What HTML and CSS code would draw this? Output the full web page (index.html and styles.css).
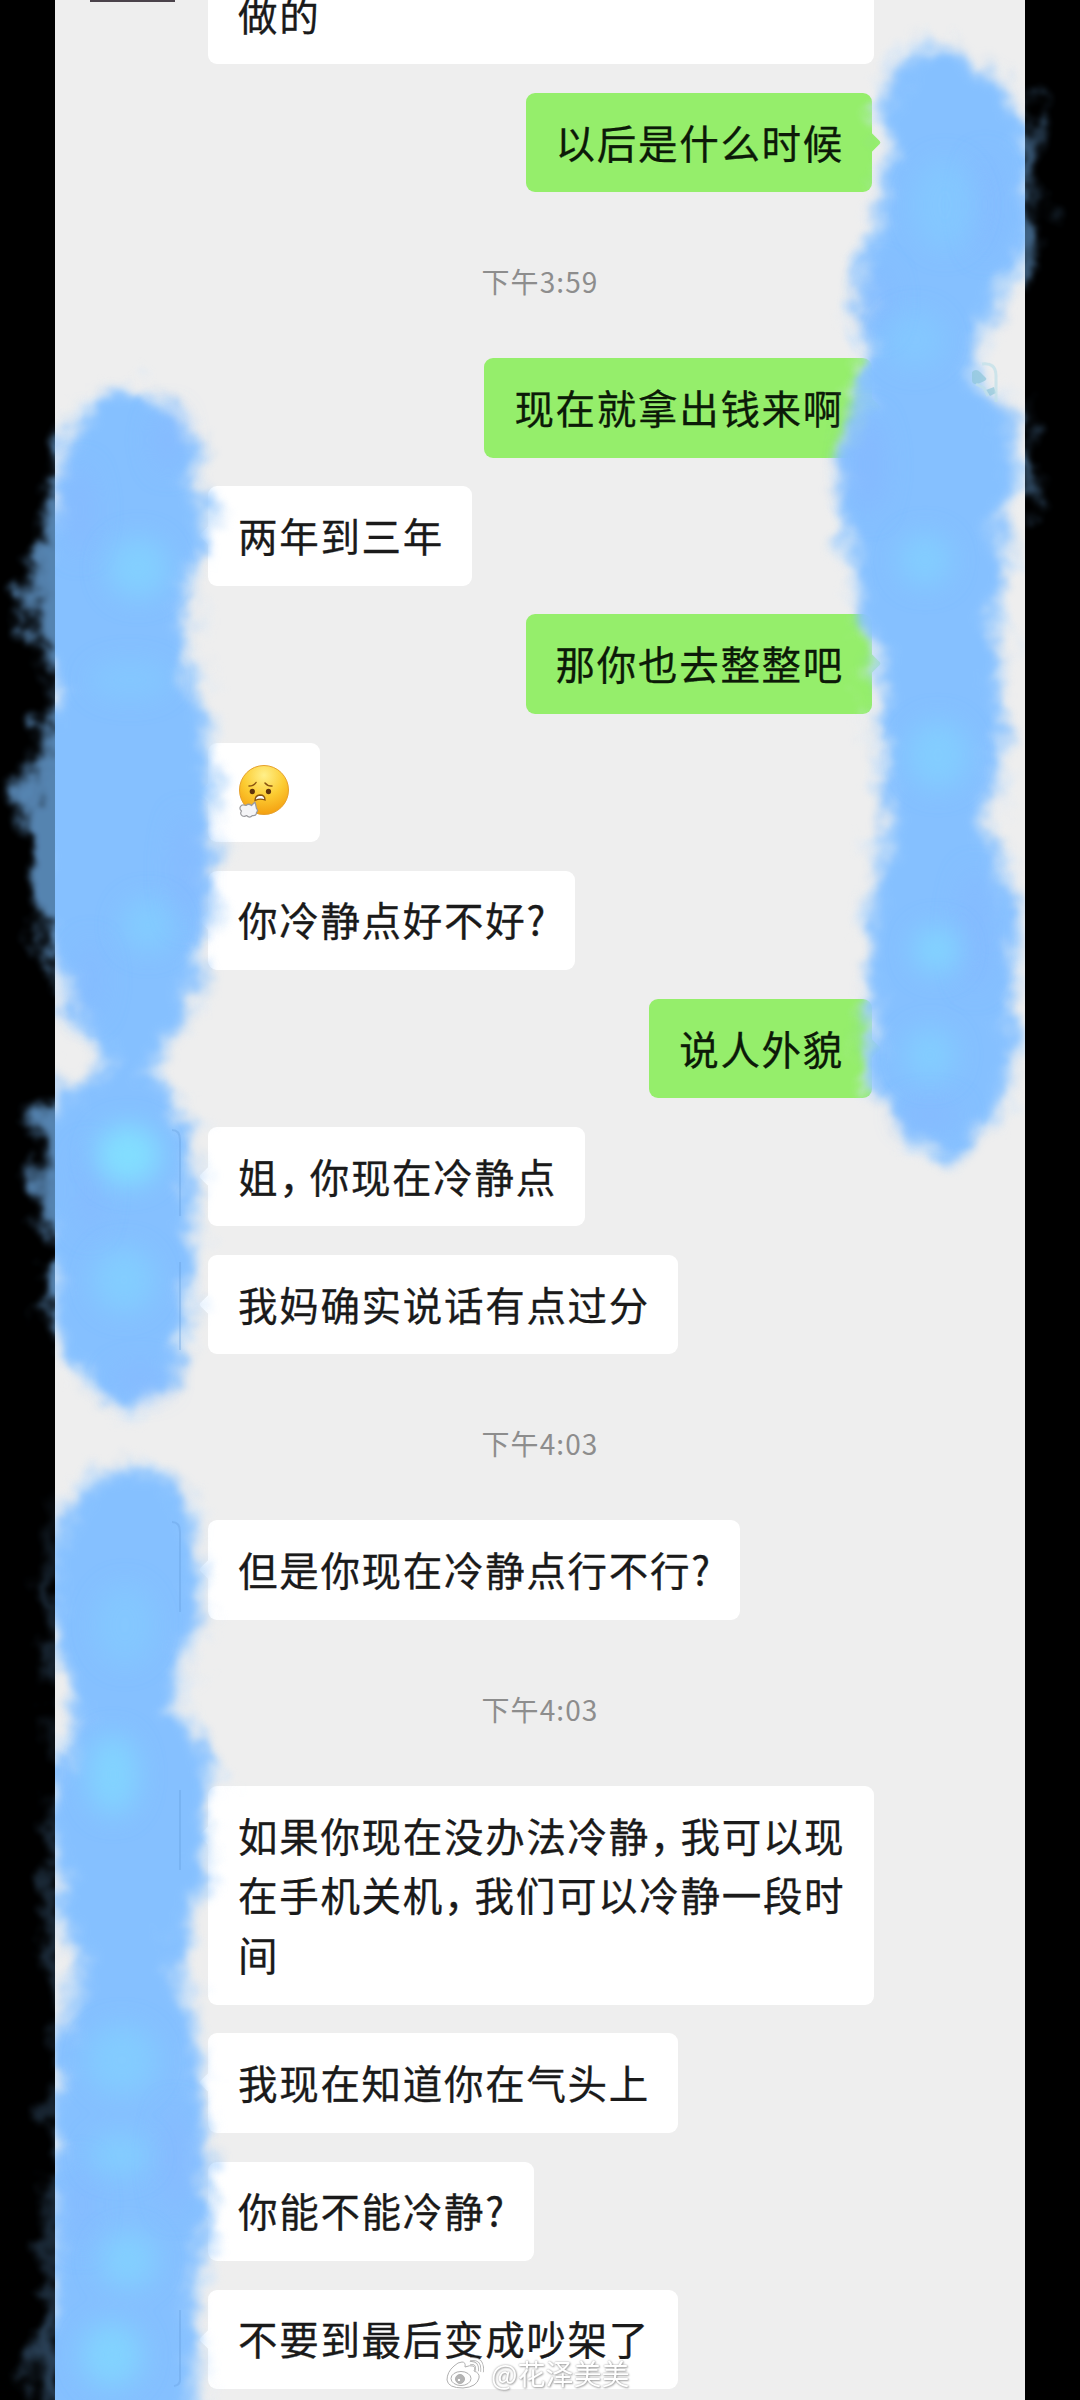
FILE: index.html
```html
<!DOCTYPE html>
<html lang="zh-CN">
<head>
<meta charset="utf-8">
<title>聊天记录</title>
<link rel="stylesheet" href="styles.css">
</head>
<body>
<div class="screen">
  <main class="chat">
    <div class="row first"><span class="avatar"></span><div class="bubble wide">做的</div></div>
    <div class="row me"><div class="bubble">以后是什么时候</div></div>
    <div class="time">下午3:59</div>
    <div class="row me"><div class="bubble">现在就拿出钱来啊</div></div>
    <div class="row"><div class="bubble">两年到三年</div></div>
    <div class="row me"><div class="bubble">那你也去整整吧</div></div>
    <div class="row"><div class="bubble emoji">
      <svg viewBox="0 0 54 56" width="54" height="56">
        <defs>
          <radialGradient id="face" cx=".5" cy=".2" r=".85"><stop offset="0" stop-color="#fff08a"/><stop offset=".5" stop-color="#fccc32"/><stop offset="1" stop-color="#f39a0c"/></radialGradient>
        </defs>
        <circle cx="26" cy="26" r="24.5" fill="url(#face)" stroke="#e6a02b" stroke-width="1"/>
        <ellipse cx="14.3" cy="27.500" rx="2.6" ry="2.8" fill="#60340c"/>
        <ellipse cx="30.5" cy="27.500" rx="2.6" ry="2.8" fill="#60340c"/>
        <path d="M11 22q5 0 7-3.500M27 19q3 3.500 7 3" fill="none" stroke="#8a5410" stroke-width="1.500" stroke-linecap="round"/>
        <path d="M17 36.500q0-5 5-5.500 5 0 5 5-5-2-10 .5z" fill="#fff" stroke="#8a5410" stroke-width="1.300"/>
        <path d="M17 38l-3.500 3.500q-3-2.500-5.500 0-4-1.500-5.500 1-1.500 2.500 1 4.500-2 3 1 5 2 1 4-.5 3 3 6 0 4 .5 4-3 2-2 0-4z" fill="#f5f5f7" stroke="#9a9a9e" stroke-width="1.200" stroke-linejoin="round"/>
      </svg>
    </div></div>
    <div class="row"><div class="bubble">你冷静点好不好?</div></div>
    <div class="row me"><div class="bubble">说人外貌</div></div>
    <div class="row"><div class="bubble">姐<span class="comma">，</span>你现在冷静点</div></div>
    <div class="row"><div class="bubble">我妈确实说话有点过分</div></div>
    <div class="time">下午4:03</div>
    <div class="row"><div class="bubble">但是你现在冷静点行不行?</div></div>
    <div class="time">下午4:03</div>
    <div class="row"><div class="bubble wide">如果你现在没办法冷静<span class="comma">，</span>我可以现<br>在手机关机<span class="comma">，</span>我们可以冷静一段时<br>间</div></div>
    <div class="row"><div class="bubble">我现在知道你在气头上</div></div>
    <div class="row"><div class="bubble">你能不能冷静?</div></div>
    <div class="row"><div class="bubble">不要到最后变成吵架了</div></div>
  </main>

  <svg class="brush" viewBox="0 0 1080 2400" width="1080" height="2400">
    <defs>
      <filter id="halo" filterUnits="userSpaceOnUse" x="-40" y="-40" width="1160" height="2480" color-interpolation-filters="sRGB">
        <feGaussianBlur stdDeviation="7" result="b"/>
        <feTurbulence type="fractalNoise" baseFrequency=".03" numOctaves="5" seed="3"/>
        <feDisplacementMap in="b" scale="60" xChannelSelector="R" yChannelSelector="G"/>
        <feGaussianBlur stdDeviation="2"/>
      </filter>
      <filter id="rough" filterUnits="userSpaceOnUse" x="-40" y="-40" width="1160" height="2480" color-interpolation-filters="sRGB">
        <feGaussianBlur stdDeviation="8" result="b"/>
        <feTurbulence type="fractalNoise" baseFrequency=".03" numOctaves="4" seed="7"/>
        <feDisplacementMap in="b" scale="38" xChannelSelector="R" yChannelSelector="G"/>
        <feGaussianBlur stdDeviation="2"/>
      </filter>
      <filter id="soft" filterUnits="userSpaceOnUse" x="0" y="0" width="1080" height="2400"><feGaussianBlur stdDeviation="13"/></filter>
      <clipPath id="panel"><rect x="55" y="0" width="970" height="2400"/></clipPath>
      <clipPath id="sides"><path d="M0 0H55V2400H0zM1025 0H1080V2400H1025z"/></clipPath>
      <path id="right" d="M925 45L965 58 998 82 1022 120 1034 165 1034 230 1007 280 985 325 968 362 990 395 1014 440 1018 480 1002 520 1003 570 994 610 1000 700 1003 740 987 800 987 840 1010 890 1018 960 1012 1000 1010 1080 987 1125 955 1155 935 1155 905 1130 878 1095 868 1060 872 1000 868 950 872 900 888 840 890 800 878 735 888 690 868 640 855 570 843 520 841 470 855 430 867 358 862 320 862 270 877 220 887 180 885 110 898 65z"/>
      <path id="left" d="M130 390L165 403 187 430 195 475 207 520 190 575 184 620 190 660 200 720 212 780 211 850 208 920 195 980 180 1020 158 1058 145 1072 168 1090 185 1120 193 1200 190 1300 175 1370 150 1400 125 1410 95 1385 70 1360 52 1320 48 1240 38 1190 32 1140 50 1095 95 1078 108 1058 77 1025 66 985 47 950 36 920 34 850 18 800 38 745 62 695 50 675 34 640 25 600 35 560 52 520 60 470 72 430 95 402z"/>
      <path id="low" d="M130 1468L160 1475 187 1500 198 1560 190 1640 172 1695 190 1725 210 1775 205 1850 193 1910 172 1960 186 2000 198 2060 208 2160 205 2230 194 2290 195 2440 40 2440 34 2360 50 2300 54 2200 53 2080 62 2020 84 1965 62 1920 50 1830 52 1775 78 1730 70 1680 54 1640 50 1550 68 1510 95 1480z"/>
    </defs>
    <g clip-path="url(#panel)">
      <g filter="url(#halo)" fill="#bcdcfb" stroke="#d3e6fa" stroke-width="10" stroke-linejoin="round" opacity=".7">
        <use href="#right"/><use href="#left"/><use href="#low"/>
      </g>
      <g filter="url(#rough)" fill="#85c0ff">
        <use href="#right"/><use href="#left"/><use href="#low"/>
      </g>
      <g filter="url(#soft)" fill="#86b8ff">
        <ellipse cx="985" cy="205" rx="15" ry="50" opacity=".5"/>
        <ellipse cx="880" cy="300" rx="12" ry="35" opacity=".5"/>
        <ellipse cx="868" cy="465" rx="16" ry="50" opacity=".8"/>
        <ellipse cx="975" cy="930" rx="16" ry="60" opacity=".6"/>
        <ellipse cx="930" cy="1115" rx="30" ry="14" opacity=".7"/>
        <ellipse cx="168" cy="440" rx="14" ry="30" opacity=".7"/>
        <ellipse cx="80" cy="510" rx="14" ry="45" opacity=".7"/>
        <ellipse cx="185" cy="870" rx="12" ry="55" opacity=".7"/>
        <ellipse cx="90" cy="980" rx="14" ry="40" opacity=".5"/>
        <ellipse cx="140" cy="1380" rx="28" ry="14" opacity=".7"/>
        <ellipse cx="90" cy="1190" rx="12" ry="45" opacity=".6"/>
        <ellipse cx="175" cy="2160" rx="14" ry="55" opacity=".7"/>
        <ellipse cx="82" cy="2205" rx="12" ry="45" opacity=".6"/>
      </g>
      <g filter="url(#soft)" fill="#82d3ff">
        <ellipse cx="945" cy="205" rx="32" ry="45" opacity=".4"/>
        <ellipse cx="915" cy="340" rx="30" ry="28" opacity=".4"/>
        <ellipse cx="925" cy="560" rx="26" ry="26" opacity=".7"/>
        <ellipse cx="938" cy="755" rx="30" ry="34" opacity=".7"/>
        <ellipse cx="937" cy="950" rx="23" ry="23"/>
        <ellipse cx="930" cy="1055" rx="25" ry="26" opacity=".7"/>
        <ellipse cx="138" cy="568" rx="30" ry="30" opacity=".8"/>
        <ellipse cx="130" cy="680" rx="40" ry="18" opacity=".4"/>
        <ellipse cx="148" cy="925" rx="26" ry="26" opacity=".6"/>
        <ellipse cx="128" cy="1155" rx="32" ry="30" fill="#82deff"/>
        <ellipse cx="124" cy="1280" rx="30" ry="32" opacity=".7"/>
        <ellipse cx="125" cy="1625" rx="30" ry="40" opacity=".4"/>
        <ellipse cx="113" cy="1775" rx="25" ry="40"/>
        <ellipse cx="122" cy="2060" rx="35" ry="35" opacity=".6"/>
        <ellipse cx="120" cy="2155" rx="30" ry="20" opacity=".7"/>
        <ellipse cx="128" cy="2260" rx="28" ry="28" opacity=".8"/>
        <ellipse cx="112" cy="2355" rx="30" ry="32"/>
      </g>
      <path d="M172 1130q8 0 8 10V1216M180 1262V1350M172 1522q8 0 8 10V1612M180 1790v80M180 2310v70q0 5-6 6" fill="none" stroke="#649ede" stroke-width="2" opacity=".35"/>
    </g>
    <g clip-path="url(#sides)">
      <g filter="url(#halo)" fill="#6ba5dd" opacity=".8">
        <use href="#left"/>
        <path d="M1010 95l17 5 4 60-4 40 14 15 2 30-12 30-21 15zM1010 405h16l4 50-5 45-15 15z" opacity=".75"/>
        <path d="M60 1490l-10 90 1 120 8 70-9 50v170l6 60-6 90 2 150-18 70 10 60h20z" opacity=".5"/>
      </g>
    </g>
    <path d="M972 372q4-4 8 0t6 6-6 5-8-3zM986 390l8-3 2 6-6 3z" fill="#8fc6d8" opacity=".7"/>
    <path d="M976 384l8 4 4 8M982 364q14-2 14 12v26" fill="none" stroke="#bfe0e8" stroke-width="3" opacity=".7"/>
  </svg>

  <div class="watermark">
    <svg viewBox="0 0 38 32" width="38" height="32">
      <g fill="#fff" stroke="#b0b0b0" stroke-width="1">
        <path d="M16 5q4 0 3 5 5-2 8-1 3 1 1 5 6 2 5 7-2 9-16 10Q2 31 1 23 1 15 8 9q4-4 8-4z"/>
        <ellipse cx="15" cy="21.500" rx="10" ry="7"/>
        <circle cx="14" cy="22" r="4.500" fill="#b4b4b4"/><circle cx="13" cy="23" r="1.800"/>
      </g>
      <path d="M24 6q8-1 7 8M24 2q14-1 12 13" fill="none" stroke="#b0b0b0" stroke-width="3.600"/>
      <path d="M24 6q8-1 7 8M24 2q14-1 12 13" fill="none" stroke="#fff" stroke-width="2"/>
    </svg>
    <span>@花泽美美</span>
  </div>
</div>
</body>
</html>
```
FILE: styles.css
```css
* { box-sizing: border-box; }

body {
  margin: 0;
  background: #000;
  font-family: "Noto Sans CJK SC", sans-serif;
}

.screen {
  position: relative;
  width: 1080px;
  height: 2400px;
  padding: 0 55px;
  overflow: hidden;
}

.chat {
  display: flex;
  flex-direction: column;
  gap: 28.8px;
  height: 2400px;
  background: #eee;
}

.row {
  display: flex;
  flex: none;
  padding: 0 151px 0 153px;
}

.row.me {
  justify-content: flex-end;
  padding-right: 153px;
}

.row.first {
  height: 64px;
  align-items: flex-end;
  padding-left: 35px;
}

.avatar {
  align-self: flex-start;
  width: 85px;
  height: 2px;
  margin-right: 33px;
  background: #4b434b;
}

.bubble {
  position: relative;
  padding: 18.8px 28px 20.8px 30px;
  border-radius: 9px;
  background: #fff;
  color: #1a1a1a;
  font-size: 39.5px;
  line-height: 59.7px;
  letter-spacing: 1.7px;
  white-space: nowrap;
  -webkit-text-stroke: 0.3px currentColor;
}

.bubble::before {
  content: "";
  position: absolute;
  left: -6px;
  top: 42px;
  width: 15px;
  height: 15px;
  border-radius: 2px;
  background: inherit;
  transform: rotate(45deg);
}

.first .bubble::before { display: none; }

.me .bubble {
  background: #95ee6b;
  color: #0c1a08;
}

.me .bubble::before {
  left: auto;
  right: -6px;
}

.bubble.wide { width: 666px; }

.bubble.emoji {
  display: flex;
  align-items: center;
  width: 112px;
  height: 99.3px;
  padding-top: 21px;
}

.emoji svg { flex: none; }

.comma { letter-spacing: -9px; }

.time {
  flex: none;
  height: 108.6px;
  padding-top: 13px;
  color: #8d8d8d;
  font-size: 28px;
  line-height: 94px;
  letter-spacing: 1.1px;
  text-align: center;
}

.brush {
  position: absolute;
  left: 0;
  top: 0;
}

.watermark {
  position: absolute;
  left: 446px;
  top: 2356px;
  display: flex;
  align-items: center;
  gap: 7px;
  color: #fff;
  font-size: 28px;
  line-height: 34px;
  text-shadow: 0 0 2px #999, 1px 1px 2px #aaa;
}
```
